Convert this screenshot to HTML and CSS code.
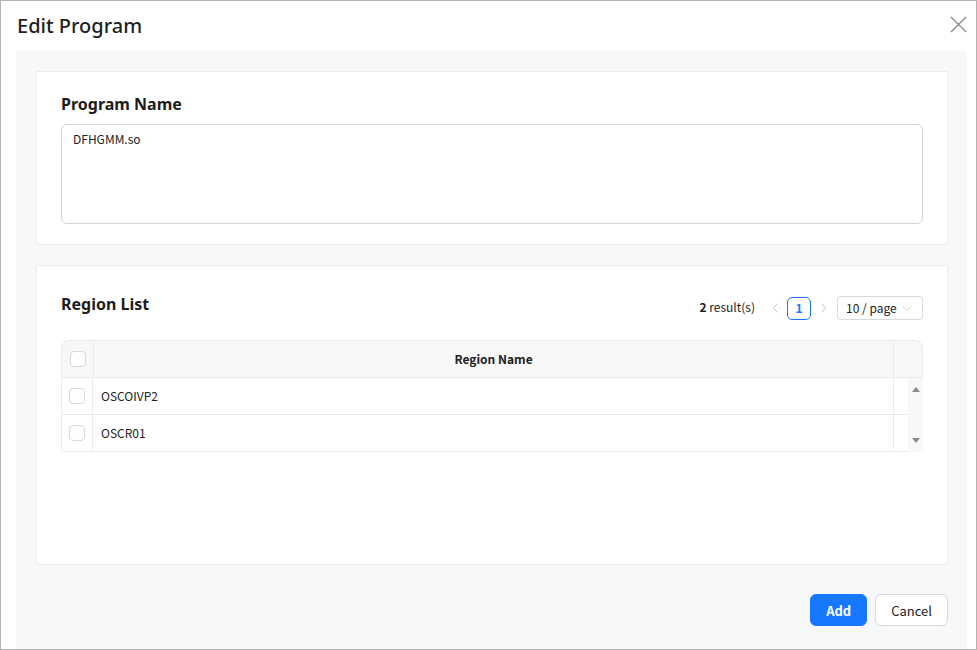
FILE: index.html
```html
<!DOCTYPE html>
<html lang="en">
<head>
    <meta charset="UTF-8">
    <title>Edit Program</title>
    <link rel="stylesheet" href="styles.css">
</head>
<body>
    <div class="modal">
        <div class="modal-header">
            <div class="modal-title">Edit Program</div>
            <svg class="close-icon" viewBox="0 0 18 18" fill="none" stroke="currentColor" stroke-width="1.4">
                <path d="M1 1L17 17M17 1L1 17" />
            </svg>
        </div>
        <div class="modal-body">
            <div class="panel panel-name">
                <div class="panel-title">Program Name</div>
                <div class="textarea">DFHGMM.so</div>
            </div>
            <div class="panel panel-region">
                <div class="panel-head">
                    <div class="panel-title">Region List</div>
                    <div class="pager">
                        <span class="total"><b>2</b> result(s)</span>
                        <span class="pager-arrow">
                            <svg viewBox="0 0 8 12" fill="none" stroke="currentColor" stroke-width="1"><path d="M6 1L1.5 6L6 11" /></svg>
                        </span>
                        <span class="pager-item">1</span>
                        <span class="pager-arrow">
                            <svg viewBox="0 0 8 12" fill="none" stroke="currentColor" stroke-width="1"><path d="M2 1L6.5 6L2 11" /></svg>
                        </span>
                        <span class="page-size">10 / page
                            <svg viewBox="0 0 12 8" fill="none" stroke="currentColor" stroke-width="1"><path d="M1 1.5L6 6.5L11 1.5" /></svg>
                        </span>
                    </div>
                </div>
                <div class="table">
                    <div class="row row-head">
                        <div class="cell cell-check"><span class="checkbox"></span></div>
                        <div class="cell cell-name">Region Name</div>
                        <div class="cell cell-gutter"></div>
                    </div>
                    <div class="table-body">
                        <div class="rows">
                            <div class="row">
                                <div class="cell cell-check"><span class="checkbox"></span></div>
                                <div class="cell cell-name">OSCOIVP2</div>
                                <div class="cell cell-pad"></div>
                            </div>
                            <div class="row">
                                <div class="cell cell-check"><span class="checkbox"></span></div>
                                <div class="cell cell-name">OSCR01</div>
                                <div class="cell cell-pad"></div>
                            </div>
                        </div>
                        <div class="scrollbar">
                            <span class="arrow-up"></span>
                            <span class="arrow-down"></span>
                        </div>
                    </div>
                </div>
            </div>
            <div class="footer">
                <button class="btn btn-primary">Add</button>
                <button class="btn">Cancel</button>
            </div>
        </div>
    </div>
</body>
</html>
```

FILE: styles.css
```css
* {
    box-sizing: border-box;
}

body {
    margin: 0;
    font-family: "Noto Sans CJK KR", "Noto Sans", sans-serif;
    color: #222;
    background-color: #fff;
}

.modal {
    width: 977px;
    height: 650px;
    border: 1px solid #b4b4b4;
    background-color: #fff;
    display: flex;
    flex-direction: column;
}

.modal-header {
    height: 50px;
    display: flex;
    justify-content: space-between;
    align-items: flex-start;
    padding: 0 9px 0 16px;
}

.modal-title {
    font-family: "Noto Sans", sans-serif;
    font-size: 20px;
    line-height: 26px;
    margin-top: 12px;
    font-weight: 500;
    color: #222;
}

.close-icon {
    width: 17px;
    height: 17px;
    margin-top: 15px;
    color: #8a8a8a;
}

.modal-body {
    flex: 1;
    margin: 0 9px 0 15px;
    background-color: #f7f8fa;
    padding: 20px 19px 0 20px;
    display: flex;
    flex-direction: column;
}

.panel {
    background-color: #fff;
    border: 1px solid #ececec;
    padding: 0 24px;
}

.panel-name {
    height: 174px;
    padding-top: 21px;
}

.panel-title {
    font-family: "Noto Sans", sans-serif;
    font-size: 16px;
    line-height: 22px;
    font-weight: 700;
    color: #1d1d1d;
}

.textarea {
    margin-top: 9px;
    height: 100px;
    border: 1px solid #d6d6d6;
    border-radius: 6px;
    padding: 4px 11px;
    font-size: 12px;
    line-height: 20px;
    color: #222;
}

.panel-region {
    margin-top: 20px;
    height: 300px;
    padding-top: 30px;
}

.panel-head {
    display: flex;
    justify-content: space-between;
    align-items: center;
    height: 24px;
}

.panel-head .panel-title {
    margin-top: -8px;
}

.pager {
    display: flex;
    align-items: center;
    font-size: 12px;
    line-height: 16px;
    color: #222;
}

.total {
    margin-right: 8px;
    margin-top: -2px;
}

.total b {
    font-weight: 700;
}

.pager-arrow {
    width: 24px;
    height: 24px;
    display: flex;
    align-items: center;
    justify-content: center;
    color: #bbb;
}

.pager-arrow svg {
    width: 7px;
    height: 10px;
}

.pager-item {
    width: 24px;
    height: 23px;
    border: 1px solid #1677ff;
    border-radius: 5px;
    color: #1677ff;
    font-weight: 700;
    display: flex;
    align-items: center;
    justify-content: center;
}

.page-size {
    margin-left: 2px;
    width: 86px;
    height: 24px;
    border: 1px solid #d9d9d9;
    border-radius: 4px;
    display: flex;
    align-items: center;
    padding: 0 8px;
    gap: 5px;
    white-space: nowrap;
}

.page-size svg {
    width: 10px;
    height: 7px;
    color: #c0c0c0;
}

.table {
    margin-top: 20px;
    font-size: 12px;
}

.row {
    display: flex;
    height: 37px;
    border-bottom: 1px solid #ebebeb;
    padding-bottom: 1px;
}

.row-head {
    height: 38px;
    background-color: #f7f7f7;
    border: 1px solid #ebebeb;
    border-radius: 8px 8px 0 0;
    font-weight: 700;
}

.cell {
    display: flex;
    align-items: center;
}

.cell-check {
    width: 32px;
    justify-content: center;
    border-right: 1px solid #ebebeb;
}

.cell-name {
    flex: 1;
    padding-left: 8px;
    border-right: 1px solid #ebebeb;
}

.row-head .cell-name {
    justify-content: center;
    padding-left: 0;
}

.cell-gutter {
    width: 28px;
}

.cell-pad {
    width: 14px;
}

.row .cell-check {
    border-left: 1px solid #ebebeb;
}

.row-head .cell-check {
    border-left: none;
}

.checkbox {
    width: 16px;
    height: 16px;
    border: 1px solid #d9d9d9;
    border-radius: 4px;
    background-color: #fff;
}

.table-body {
    display: flex;
}

.rows {
    flex: 1;
}

.scrollbar {
    width: 15px;
    background-color: #f8f8f8;
    display: flex;
    flex-direction: column;
    justify-content: space-between;
    align-items: center;
    padding: 9px 0 9px;
}

.arrow-up {
    width: 0;
    height: 0;
    border-left: 4px solid transparent;
    border-right: 4px solid transparent;
    border-bottom: 5px solid #8a8a8a;
}

.arrow-down {
    width: 0;
    height: 0;
    border-left: 4px solid transparent;
    border-right: 4px solid transparent;
    border-top: 5px solid #8a8a8a;
}

.footer {
    display: flex;
    justify-content: flex-end;
    gap: 8px;
    margin-top: 29px;
}

.btn {
    height: 32px;
    padding: 0 15px;
    font-family: "Noto Sans CJK KR", "Noto Sans", sans-serif;
    font-size: 13px;
    border: 1px solid #d9d9d9;
    border-radius: 6px;
    background-color: #fff;
    color: #222;
}

.btn-primary {
    background-color: #1677ff;
    border-color: #1677ff;
    color: #fff;
    font-weight: 700;
}
```
